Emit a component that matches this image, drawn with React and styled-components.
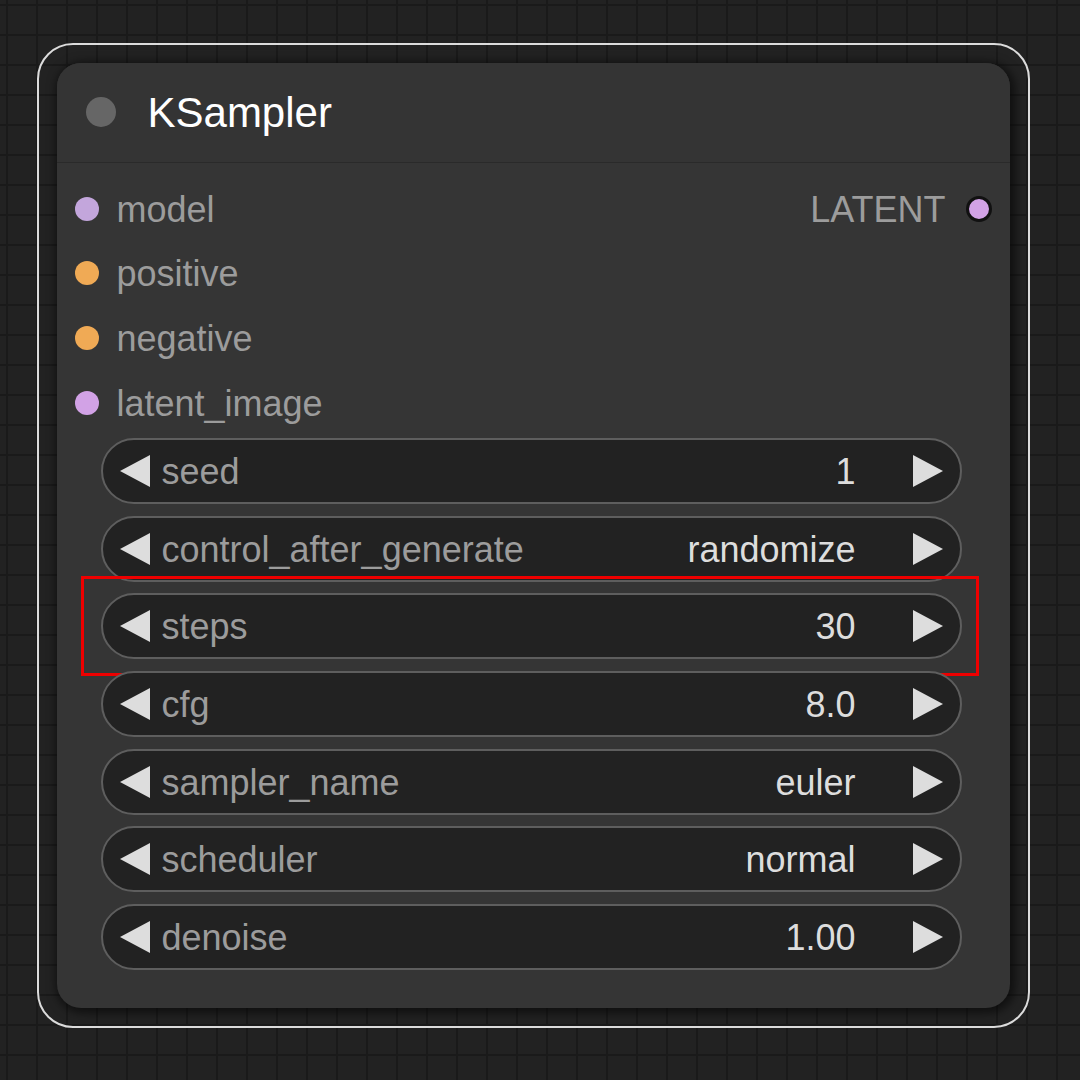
import React from "react";
import styled, { createGlobalStyle } from "styled-components";

const Global = createGlobalStyle`
  html, body { margin: 0; padding: 0; }
  body {
    width: 1080px;
    height: 1080px;
    overflow: hidden;
    font-family: "Liberation Sans", Arial, Helvetica, sans-serif;
    background-color: #222222;
    background-image:
      linear-gradient(to right, #1a1a1a 0 2px, transparent 2px),
      linear-gradient(to bottom, #1a1a1a 0 2px, transparent 2px);
    background-size: 30px 30px;
    background-position: 6px 4px;
  }
`;

const Canvas = styled.div`
  width: 1080px;
  height: 1080px;
  box-sizing: border-box;
  padding: 43px 0 0 37px;
`;

const Selection = styled.div`
  width: 993px;
  height: 985px;
  box-sizing: border-box;
  border: 2.5px solid #dcdcdc;
  border-radius: 36px;
  padding: 17.5px;
`;

const Node = styled.div`
  width: 953px;
  height: 945px;
  box-sizing: border-box;
  background: #353535;
  border-radius: 24px;
  box-shadow: 2px 2px 10px 3px rgba(0, 0, 0, 0.55);
  display: flex;
  flex-direction: column;
`;

const TitleBar = styled.div`
  height: 99px;
  border-bottom: 1.5px solid #2a2a2a;
  display: flex;
  align-items: center;
  padding-left: 29px;
  gap: 32px;
  background: #343434;
  border-radius: 24px 24px 0 0;
`;

const TitleDot = styled.span`
  width: 30px;
  height: 30px;
  border-radius: 50%;
  background: #666666;
`;

const Title = styled.span`
  color: #ffffff;
  font-size: 42px;
  line-height: 1;
  margin-top: 2px;
`;

const Slots = styled.div`
  padding: 14px 18px 0 18px;
  display: flex;
  flex-direction: column;
`;

const SlotRow = styled.div`
  height: 64.6px;
  display: flex;
  align-items: center;
  justify-content: space-between;
`;

const Slot = styled.div`
  display: flex;
  align-items: center;
  gap: ${(p) => (p.$out ? "20px" : "18px")};
  color: #9c9c9c;
  font-size: 36px;
  line-height: 1;
`;

const SlotText = styled.span`
  padding-top: 2px;
`;

const Dot = styled.span`
  width: ${(p) => (p.$out ? "26px" : "24px")};
  height: ${(p) => (p.$out ? "26px" : "24px")};
  border-radius: 50%;
  box-sizing: border-box;
  background: ${(p) => p.$color};
  border: ${(p) => (p.$out ? "3px solid #111" : "none")};
  flex: none;
`;

const Widgets = styled.div`
  margin-top: 3px;
  padding: 0 48px 0 44px;
  display: flex;
  flex-direction: column;
  gap: 11.7px;
`;

const WidgetWrap = styled.div`
  position: relative;
`;

const Widget = styled.div`
  height: 66px;
  box-sizing: border-box;
  border: 2px solid #5e5e5e;
  border-radius: 33px;
  background: #222222;
  display: flex;
  align-items: center;
  padding: 0 17px;
  font-size: 36px;
  line-height: 1;
`;

const Label = styled.span`
  flex: 1;
  color: #9c9c9c;
  margin-left: 12px;
  padding-top: 2px;
`;

const Value = styled.span`
  color: #dddddd;
  margin-right: 57px;
  padding-top: 2px;
`;

const Highlight = styled.div`
  position: absolute;
  left: -20px;
  right: -17px;
  top: -17px;
  bottom: -17px;
  border: 3px solid #ee0000;
  pointer-events: none;
`;

const Arrow = ({ dir }) => (
  <svg width="30" height="32" viewBox="0 0 30 32" style={{ flex: "none" }}>
    <polygon
      points={dir === "left" ? "30,0 30,32 0,16" : "0,0 0,32 30,16"}
      fill="#dddddd"
    />
  </svg>
);

const inputs = [
  { name: "model", color: "#c3a6dc" },
  { name: "positive", color: "#f0aa55" },
  { name: "negative", color: "#f0aa55" },
  { name: "latent_image", color: "#d2a2e6" },
];

const widgets = [
  { label: "seed", value: "1" },
  { label: "control_after_generate", value: "randomize" },
  { label: "steps", value: "30", highlight: true },
  { label: "cfg", value: "8.0" },
  { label: "sampler_name", value: "euler" },
  { label: "scheduler", value: "normal" },
  { label: "denoise", value: "1.00" },
];

export default function App() {
  return (
    <>
      <Global />
      <Canvas>
        <Selection>
          <Node>
            <TitleBar>
              <TitleDot />
              <Title>KSampler</Title>
            </TitleBar>
            <Slots>
              {inputs.map((s, i) => (
                <SlotRow key={s.name}>
                  <Slot>
                    <Dot $color={s.color} />
                    <SlotText>{s.name}</SlotText>
                  </Slot>
                  {i === 0 && (
                    <Slot $out>
                      <SlotText>LATENT</SlotText>
                      <Dot $out $color="#d2a2e6" />
                    </Slot>
                  )}
                </SlotRow>
              ))}
            </Slots>
            <Widgets>
              {widgets.map((w) => (
                <WidgetWrap key={w.label}>
                  <Widget>
                    <Arrow dir="left" />
                    <Label>{w.label}</Label>
                    <Value>{w.value}</Value>
                    <Arrow dir="right" />
                  </Widget>
                  {w.highlight && <Highlight />}
                </WidgetWrap>
              ))}
            </Widgets>
          </Node>
        </Selection>
      </Canvas>
    </>
  );
}
